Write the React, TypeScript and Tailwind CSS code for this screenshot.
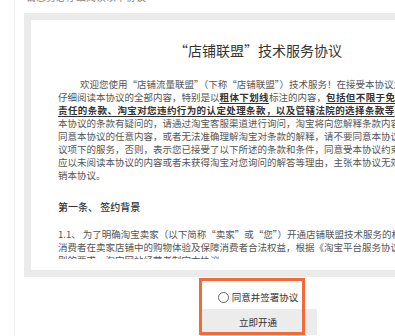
import React from "react";

const BU = ({ children }: { children: React.ReactNode }) => (
  <span className="font-bold underline text-[#333] underline-offset-[2px] tracking-[0.4px]">{children}</span>
);

export default function App() {
  return (
    <div
      className="relative w-[395px] h-[336px] overflow-hidden bg-white"
      style={{ fontFamily: '"Noto Sans CJK SC", "Noto Sans", sans-serif' }}
    >
      <div className="ml-[14px] h-full border-l border-[#efefef] pl-[9px]">
        <div className="h-[13px] overflow-hidden">
          <div className="-mt-[9px] pl-[2px] text-[10px] leading-[12px] text-[#888] whitespace-nowrap">
            请您务必仔细阅读以下协议
          </div>
        </div>
        <div className="w-[468px] border-[7px] border-[#ebebeb] bg-white">
          <div className="h-[239px] overflow-hidden">
            <div className="pt-[20px] text-center text-[14px] leading-[20px] text-[#333] whitespace-nowrap">
              “店铺联盟”技术服务协议
            </div>
            <div className="mt-[18px] px-[27px] text-[9.5px] leading-[13px] text-[#555] whitespace-nowrap">
              <div className="pl-[22px]">欢迎您使用“店铺流量联盟”（下称“店铺联盟”）技术服务！在接受本协议之前，请您</div>
              <div>
                仔细阅读本协议的全部内容，特别是以<BU>粗体下划线</BU>标注的内容，<BU>包括但不限于免除或者限制</BU>
              </div>
              <div>
                <BU>责任的条款、淘宝对您违约行为的认定处理条款，以及管辖法院的选择条款等</BU>。如您对
              </div>
              <div>本协议的条款有疑问的，请通过淘宝客服渠道进行询问，淘宝将向您解释条款内容。如您不</div>
              <div>同意本协议的任意内容，或者无法准确理解淘宝对条款的解释，请不要同意本协议或使用本协</div>
              <div>议项下的服务，否则，表示您已接受了以下所述的条款和条件，同意受本协议约束。届时您不</div>
              <div>应以未阅读本协议的内容或者未获得淘宝对您询问的解答等理由，主张本协议无效，或要求撤</div>
              <div>销本协议。</div>
            </div>
            <div className="mt-[18px] px-[27px] text-[10px] leading-[14px] font-medium text-[#333] whitespace-nowrap">
              第一条、 签约背景
            </div>
            <div className="mt-[14px] px-[27px] text-[9.5px] leading-[13px] text-[#555] whitespace-nowrap">
              <div>1.1、 为了明确淘宝卖家（以下简称“卖家”或“您”）开通店铺联盟技术服务的权利和义务，保障</div>
              <div>消费者在卖家店铺中的购物体验及保障消费者合法权益，根据《淘宝平台服务协议》等规</div>
              <div>则的要求，淘宝网站经营者制定本协议。</div>
            </div>
          </div>
          <div className="h-[11px]" />
        </div>
        <div className="w-[468px] flex flex-col items-center">
          <div className="mt-[13px] h-[14px] flex items-center gap-[3px] text-[9.5px] leading-[14px] text-[#333]">
            <span className="w-[11px] h-[11px] rounded-full border border-[#666] bg-white" />
            <span>同意并签署协议</span>
          </div>
          <div className="mt-[5px] w-[118px] h-[26px] bg-[#ececec] flex items-center justify-center text-[9.5px] text-[#333]">
            立即开通
          </div>
        </div>
      </div>
      <div className="absolute left-[199px] top-[278px] w-[106px] h-[57px] border-[3px] border-[#f36a3a]" />
    </div>
  );
}
